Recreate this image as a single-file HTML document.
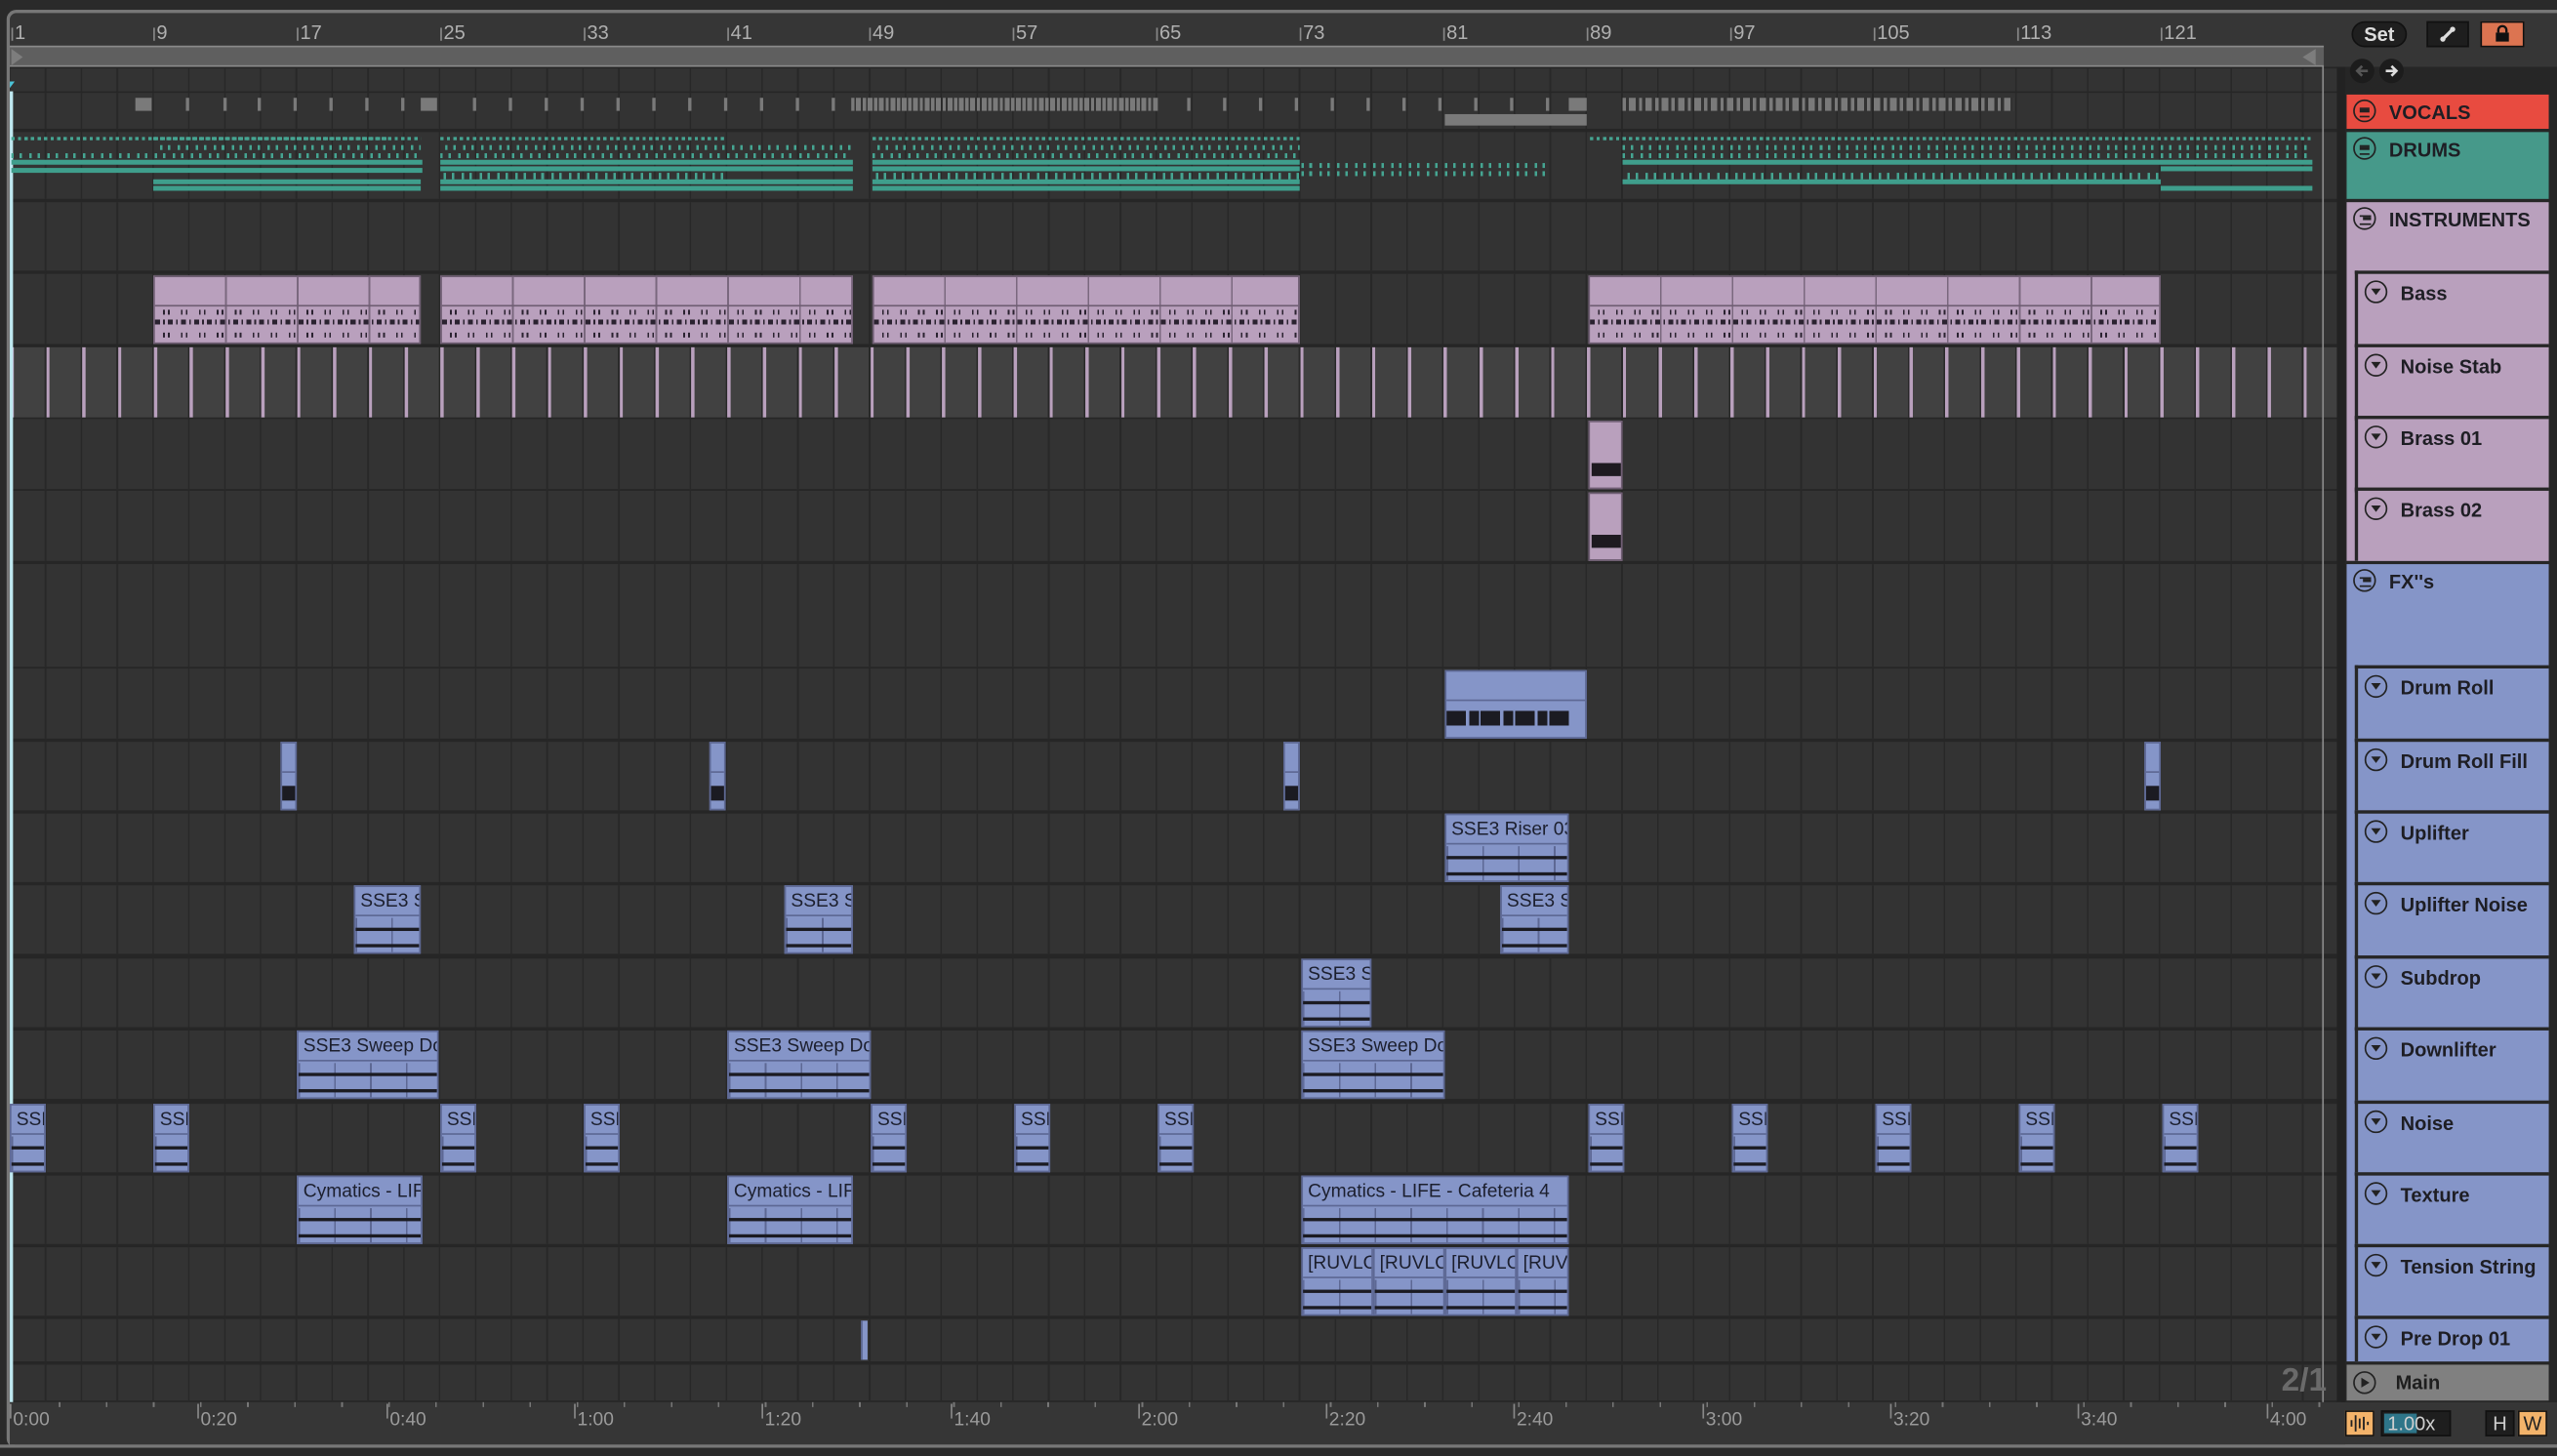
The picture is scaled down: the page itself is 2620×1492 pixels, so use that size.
<!DOCTYPE html>
<html><head><meta charset="utf-8"><style>
*{margin:0;padding:0;box-sizing:border-box}
html,body{width:2620px;height:1492px;overflow:hidden;background:#2a2a2a}
#w{position:absolute;left:0;top:0;width:1568px;height:893px;transform:scale(1.67092,1.67077);transform-origin:0 0;font-family:"Liberation Sans",sans-serif}
.a{position:absolute}
.row{position:absolute;left:6px;width:1429px;background-color:#333;background-image:repeating-linear-gradient(90deg,#282828 0 1px,transparent 1px 21.97px);background-position:-0.5px 0}
.bn{position:absolute;top:14px;font-size:12px;color:#b0b0b0;padding-left:2px;height:13px;line-height:12px}
.bn:before{content:"";position:absolute;left:0;top:3px;width:1px;height:8px;background:#888}
.tn{position:absolute;top:862px;font-size:11.5px;color:#9a9a9a;padding-left:2px;padding-top:3px;height:17px}
.tn:before{content:"";position:absolute;left:0;top:-1px;width:1px;height:9px;background:#888}
.cl{position:absolute;background:#8595c8;border:1px solid #5d6894;overflow:hidden}
.cl .t{height:18px;line-height:18px;font-size:11.5px;color:#1c1f2e;padding-left:3px;white-space:nowrap;border-bottom:1px solid #5d6894}
.cl .wv{position:absolute;left:0;right:0;top:19px;bottom:0;background-image:linear-gradient(#1b1b22,#1b1b22),linear-gradient(#1b1b22,#1b1b22),repeating-linear-gradient(90deg,#5d6894 0 1px,transparent 1px 21.97px);background-size:100% 2px,100% 2px,100% 100%;background-position:0 6px,0 16px,0 0;background-repeat:no-repeat,no-repeat,repeat}
.pk{position:absolute;background:#b9a0bd;border:1px solid #6f5e73}
.hd{position:absolute;left:1439px;width:124px;font-weight:bold;font-size:12px;color:#1e1e24}
.ch{position:absolute;left:1444px;width:119px;border:2px solid #262626;border-right:none;font-weight:bold;font-size:12px;color:#1e1e24}
.ic{position:absolute;width:14px;height:14px;border:1.3px solid #222;border-radius:50%}
.ic.tri:after{content:"";position:absolute;left:2.5px;top:4px;border-left:3.2px solid transparent;border-right:3.2px solid transparent;border-top:4.5px solid #222}
.ic.ln:after{content:"";position:absolute;left:3px;top:3.5px;width:6px;height:4px;border-top:1.3px solid #222;border-bottom:1.3px solid #222}
.ic.ln:before{content:"";position:absolute;left:3px;top:5.3px;width:6px;height:1.3px;background:#222}
.ic.gr:after{content:"";position:absolute;left:2.5px;top:3.5px;width:7px;height:4px;border-top:1.3px solid #222;border-bottom:1.3px solid #222}
.ic.gr:before{content:"";position:absolute;left:4.5px;top:5.3px;width:5px;height:1.3px;background:#222}
.lbl{position:absolute;left:26px;top:6px}
.dr{position:absolute;background:#3f9e8c;height:2px}
.dd{position:absolute;height:2px;background:repeating-linear-gradient(90deg,#45a592 0 2px,transparent 2px 4px)}
.dd2{position:absolute;height:3px;background:repeating-linear-gradient(90deg,#45a592 0 1.5px,transparent 1.5px 5px,#45a592 5px 6.5px,transparent 6.5px 11px)}
.vb{position:absolute;top:60px;height:8px;background:#7a7a7a}
</style></head><body><div id="w">
<div class="a" style="left:4px;top:6px;width:1564px;height:882px;border:2px solid #777;border-right:none;border-radius:6px 0 0 6px;background:#363636"></div>
<div class="bn" style="left:7px">1</div><div class="bn" style="left:94px">9</div><div class="bn" style="left:182px">17</div><div class="bn" style="left:270px">25</div><div class="bn" style="left:358px">33</div><div class="bn" style="left:446px">41</div><div class="bn" style="left:533px">49</div><div class="bn" style="left:621px">57</div><div class="bn" style="left:709px">65</div><div class="bn" style="left:797px">73</div><div class="bn" style="left:885px">81</div><div class="bn" style="left:973px">89</div><div class="bn" style="left:1061px">97</div><div class="bn" style="left:1149px">105</div><div class="bn" style="left:1237px">113</div><div class="bn" style="left:1325px">121</div>
<div class="a" style="left:6px;top:28px;width:1419px;height:13px;background:#5f5f5f;border-top:1.5px solid #8a8a8a;border-bottom:1.5px solid #8a8a8a"></div>
<div class="a" style="left:7px;top:30px;width:0;height:0;border-top:5px solid transparent;border-bottom:5px solid transparent;border-left:7px solid #7d7d7d"></div>
<div class="a" style="left:1412px;top:30px;width:0;height:0;border-top:5px solid transparent;border-bottom:5px solid transparent;border-right:8px solid #7d7d7d"></div>
<div class="a" style="left:6px;top:41px;width:1432px;height:819px;background:#262626"></div>
<div class="row" style="top:42px;height:14px"></div>
<div class="row" style="top:57px;height:22px"></div>
<div class="row" style="top:81px;height:41px"></div>
<div class="row" style="top:124px;height:42px"></div>
<div class="row" style="top:168px;height:43px"></div>
<div class="row" style="top:213px;height:43px;background-color:#414141;background-image:repeating-linear-gradient(90deg,#282828 0 1px,#b9a0bd 1px 3px,transparent 3px 21.97px)"></div>
<div class="row" style="top:257px;height:43px"></div>
<div class="row" style="top:301px;height:43px"></div>
<div class="row" style="top:346px;height:63px"></div>
<div class="row" style="top:410px;height:43px"></div>
<div class="row" style="top:455px;height:42px"></div>
<div class="row" style="top:499px;height:42px"></div>
<div class="row" style="top:543px;height:42px"></div>
<div class="row" style="top:588px;height:42px"></div>
<div class="row" style="top:632px;height:42px"></div>
<div class="row" style="top:677px;height:42px"></div>
<div class="row" style="top:721px;height:42px"></div>
<div class="row" style="top:765px;height:42px"></div>
<div class="row" style="top:809px;height:26px"></div>
<div class="row" style="top:837px;height:22px"></div>
<div class="a" style="left:1424px;top:41px;width:1px;height:819px;background:#8a8a8a"></div>
<div class="a" style="left:1433px;top:41px;width:6px;height:819px;background:#222"></div>
<div class="a" style="left:6px;top:56px;width:1.5px;height:804px;background:#bfe8f0"></div>
<div class="a" style="left:6px;top:50px;width:0;height:0;border-left:3px solid #4cc4d8;border-right:3px solid transparent;border-bottom:4px solid transparent"></div>
<div class="vb" style="left:83px;width:10px"></div><div class="vb" style="left:114px;width:2px"></div><div class="vb" style="left:137px;width:2px"></div><div class="vb" style="left:158px;width:2px"></div><div class="vb" style="left:180px;width:2px"></div><div class="vb" style="left:202px;width:2px"></div><div class="vb" style="left:224px;width:2px"></div><div class="vb" style="left:246px;width:2px"></div><div class="vb" style="left:258px;width:10px"></div><div class="vb" style="left:290px;width:2px"></div><div class="vb" style="left:312px;width:2px"></div><div class="vb" style="left:334px;width:2px"></div><div class="vb" style="left:356px;width:2px"></div><div class="vb" style="left:378px;width:2px"></div><div class="vb" style="left:400px;width:2px"></div><div class="vb" style="left:422px;width:2px"></div><div class="vb" style="left:444px;width:2px"></div><div class="vb" style="left:466px;width:2px"></div><div class="vb" style="left:488px;width:2px"></div><div class="vb" style="left:510px;width:2px"></div>
<div class="vb" style="left:522px;width:188px;background:repeating-linear-gradient(90deg,#7a7a7a 0 2px,transparent 2px 3px,#7a7a7a 3px 6px,transparent 6px 7px)"></div>
<div class="vb" style="left:728px;width:2px"></div><div class="vb" style="left:750px;width:2px"></div><div class="vb" style="left:772px;width:2px"></div><div class="vb" style="left:794px;width:2px"></div><div class="vb" style="left:816px;width:2px"></div><div class="vb" style="left:838px;width:2px"></div><div class="vb" style="left:860px;width:2px"></div><div class="vb" style="left:882px;width:2px"></div><div class="vb" style="left:904px;width:2px"></div><div class="vb" style="left:926px;width:2px"></div><div class="vb" style="left:948px;width:2px"></div><div class="vb" style="left:962px;width:11px"></div>
<div class="a" style="left:886px;top:70px;width:87px;height:7px;background:#7a7a7a"></div>
<div class="vb" style="left:995px;width:240px;background:repeating-linear-gradient(90deg,#7a7a7a 0 2px,transparent 2px 4px,#7a7a7a 4px 8px,transparent 8px 10px)"></div>
<div class="dd" style="left:7px;top:84px;width:231px"></div>
<div class="dd2" style="left:7px;top:94px;width:250px"></div>
<div class="dr" style="left:7px;top:98px;width:252px;height:3px"></div><div class="dr" style="left:7px;top:103px;width:252px;height:3px"></div>
<div class="dd" style="left:94px;top:84px;width:164px"></div><div class="dd2" style="left:98px;top:89px;width:160px"></div>
<div class="dr" style="left:94px;top:110px;width:164px;height:3px"></div><div class="dr" style="left:94px;top:114px;width:164px;height:3px"></div>
<div class="dd" style="left:270px;top:84px;width:174px"></div><div class="dd2" style="left:273px;top:89px;width:250px"></div><div class="dd2" style="left:270px;top:94px;width:253px"></div>
<div class="dr" style="left:270px;top:98px;width:253px;height:3px"></div><div class="dr" style="left:270px;top:102px;width:253px;height:3px"></div>
<div class="dd2" style="left:272px;top:106px;width:172px;height:4px"></div>
<div class="dr" style="left:270px;top:110px;width:253px;height:3px"></div><div class="dr" style="left:270px;top:114px;width:253px;height:3px"></div>
<div class="dd" style="left:535px;top:84px;width:262px"></div><div class="dd2" style="left:538px;top:89px;width:259px"></div><div class="dd2" style="left:535px;top:94px;width:262px"></div>
<div class="dr" style="left:535px;top:98px;width:262px;height:3px"></div><div class="dr" style="left:535px;top:102px;width:262px;height:3px"></div>
<div class="dd2" style="left:537px;top:106px;width:260px;height:4px"></div>
<div class="dr" style="left:535px;top:110px;width:262px;height:3px"></div><div class="dr" style="left:535px;top:114px;width:262px;height:3px"></div>
<div class="dd2" style="left:798px;top:100px;width:152px;height:3px"></div><div class="dd2" style="left:798px;top:105px;width:152px;height:3px"></div>
<div class="dd" style="left:975px;top:84px;width:443px"></div><div class="dd2" style="left:995px;top:89px;width:423px"></div><div class="dd2" style="left:995px;top:94px;width:423px"></div>
<div class="dr" style="left:995px;top:98px;width:423px;height:3px"></div><div class="dr" style="left:1325px;top:102px;width:93px;height:3px"></div>
<div class="dd2" style="left:998px;top:106px;width:327px;height:4px"></div>
<div class="dr" style="left:995px;top:110px;width:330px;height:3px"></div><div class="dr" style="left:1325px;top:114px;width:93px;height:3px"></div>
<div class="pk" style="left:94px;top:169px;width:164px;height:42px;background-image:linear-gradient(#6f5e73,#6f5e73),repeating-linear-gradient(90deg,transparent 0 43px,#7a687e 43px 44px);background-size:100% 1px,100% 100%;background-position:0 17px,0 0;background-repeat:no-repeat,repeat"></div>
<div class="pk" style="left:270px;top:169px;width:253px;height:42px;background-image:linear-gradient(#6f5e73,#6f5e73),repeating-linear-gradient(90deg,transparent 0 43px,#7a687e 43px 44px);background-size:100% 1px,100% 100%;background-position:0 17px,0 0;background-repeat:no-repeat,repeat"></div>
<div class="pk" style="left:535px;top:169px;width:262px;height:42px;background-image:linear-gradient(#6f5e73,#6f5e73),repeating-linear-gradient(90deg,transparent 0 43px,#7a687e 43px 44px);background-size:100% 1px,100% 100%;background-position:0 17px,0 0;background-repeat:no-repeat,repeat"></div>
<div class="pk" style="left:974px;top:169px;width:351px;height:42px;background-image:linear-gradient(#6f5e73,#6f5e73),repeating-linear-gradient(90deg,transparent 0 43px,#7a687e 43px 44px);background-size:100% 1px,100% 100%;background-position:0 17px,0 0;background-repeat:no-repeat,repeat"></div>
<div class="a" style="left:95px;top:190px;width:162px;height:3px;background:repeating-linear-gradient(90deg,transparent 0 5px,#2a2230 5px 6px,transparent 6px 8px,#2a2230 8px 9px,transparent 9px 11px)"></div>
<div class="a" style="left:95px;top:196px;width:162px;height:3px;background:repeating-linear-gradient(90deg,#2a2230 0 3px,transparent 3px 5px,#2a2230 5px 6px,transparent 6px 8px)"></div>
<div class="a" style="left:95px;top:204px;width:162px;height:3px;background:repeating-linear-gradient(90deg,transparent 0 5px,#2a2230 5px 6px,transparent 6px 8px,#2a2230 8px 9px,transparent 9px 11px)"></div>
<div class="a" style="left:271px;top:190px;width:251px;height:3px;background:repeating-linear-gradient(90deg,transparent 0 5px,#2a2230 5px 6px,transparent 6px 8px,#2a2230 8px 9px,transparent 9px 11px)"></div>
<div class="a" style="left:271px;top:196px;width:251px;height:3px;background:repeating-linear-gradient(90deg,#2a2230 0 3px,transparent 3px 5px,#2a2230 5px 6px,transparent 6px 8px)"></div>
<div class="a" style="left:271px;top:204px;width:251px;height:3px;background:repeating-linear-gradient(90deg,transparent 0 5px,#2a2230 5px 6px,transparent 6px 8px,#2a2230 8px 9px,transparent 9px 11px)"></div>
<div class="a" style="left:536px;top:190px;width:260px;height:3px;background:repeating-linear-gradient(90deg,transparent 0 5px,#2a2230 5px 6px,transparent 6px 8px,#2a2230 8px 9px,transparent 9px 11px)"></div>
<div class="a" style="left:536px;top:196px;width:260px;height:3px;background:repeating-linear-gradient(90deg,#2a2230 0 3px,transparent 3px 5px,#2a2230 5px 6px,transparent 6px 8px)"></div>
<div class="a" style="left:536px;top:204px;width:260px;height:3px;background:repeating-linear-gradient(90deg,transparent 0 5px,#2a2230 5px 6px,transparent 6px 8px,#2a2230 8px 9px,transparent 9px 11px)"></div>
<div class="a" style="left:975px;top:190px;width:349px;height:3px;background:repeating-linear-gradient(90deg,transparent 0 5px,#2a2230 5px 6px,transparent 6px 8px,#2a2230 8px 9px,transparent 9px 11px)"></div>
<div class="a" style="left:975px;top:196px;width:349px;height:3px;background:repeating-linear-gradient(90deg,#2a2230 0 3px,transparent 3px 5px,#2a2230 5px 6px,transparent 6px 8px)"></div>
<div class="a" style="left:975px;top:204px;width:349px;height:3px;background:repeating-linear-gradient(90deg,transparent 0 5px,#2a2230 5px 6px,transparent 6px 8px,#2a2230 8px 9px,transparent 9px 11px)"></div>
<div class="pk" style="left:974px;top:258px;width:21px;height:42px;background-image:linear-gradient(#1e1a20,#1e1a20);background-size:18px 8px;background-position:1px 25px;background-repeat:no-repeat"></div>
<div class="pk" style="left:974px;top:302px;width:21px;height:42px;background-image:linear-gradient(#1e1a20,#1e1a20);background-size:18px 8px;background-position:1px 25px;background-repeat:no-repeat"></div>
<div class="cl" style="left:886px;top:411px;width:87px;height:42px"><div class="t"></div><div class="a" style="left:0;top:24px;width:76px;height:9px;background:repeating-linear-gradient(90deg,#1b1b22 0 12px,#8595c8 12px 14px,#1b1b22 14px 20px,#8595c8 20px 21px)"></div></div>
<div class="cl" style="left:172px;top:455px;width:10px;height:42px"><div class="t"></div><div class="a" style="left:0;top:26px;width:9px;height:9px;background:#1b1b22"></div></div>
<div class="cl" style="left:435px;top:455px;width:10px;height:42px"><div class="t"></div><div class="a" style="left:0;top:26px;width:9px;height:9px;background:#1b1b22"></div></div>
<div class="cl" style="left:787px;top:455px;width:10px;height:42px"><div class="t"></div><div class="a" style="left:0;top:26px;width:9px;height:9px;background:#1b1b22"></div></div>
<div class="cl" style="left:1315px;top:455px;width:10px;height:42px"><div class="t"></div><div class="a" style="left:0;top:26px;width:9px;height:9px;background:#1b1b22"></div></div>
<div class="cl" style="left:886px;top:499px;width:76px;height:42px"><div class="t">SSE3 Riser 03</div><div class="wv"></div></div>
<div class="cl" style="left:217px;top:543px;width:41px;height:42px"><div class="t">SSE3 Sweep</div><div class="wv"></div></div>
<div class="cl" style="left:481px;top:543px;width:42px;height:42px"><div class="t">SSE3 Sweep</div><div class="wv"></div></div>
<div class="cl" style="left:920px;top:543px;width:42px;height:42px"><div class="t">SSE3 Sweep</div><div class="wv"></div></div>
<div class="cl" style="left:798px;top:588px;width:43px;height:42px"><div class="t">SSE3 Sub</div><div class="wv"></div></div>
<div class="cl" style="left:182px;top:632px;width:87px;height:42px"><div class="t">SSE3 Sweep Down</div><div class="wv"></div></div>
<div class="cl" style="left:446px;top:632px;width:88px;height:42px"><div class="t">SSE3 Sweep Down</div><div class="wv"></div></div>
<div class="cl" style="left:798px;top:632px;width:88px;height:42px"><div class="t">SSE3 Sweep Down</div><div class="wv"></div></div>
<div class="cl" style="left:6px;top:677px;width:22px;height:42px"><div class="t">SSE3</div><div class="wv"></div></div>
<div class="cl" style="left:94px;top:677px;width:22px;height:42px"><div class="t">SSE3</div><div class="wv"></div></div>
<div class="cl" style="left:270px;top:677px;width:22px;height:42px"><div class="t">SSE3</div><div class="wv"></div></div>
<div class="cl" style="left:358px;top:677px;width:22px;height:42px"><div class="t">SSE3</div><div class="wv"></div></div>
<div class="cl" style="left:534px;top:677px;width:22px;height:42px"><div class="t">SSE3</div><div class="wv"></div></div>
<div class="cl" style="left:622px;top:677px;width:22px;height:42px"><div class="t">SSE3</div><div class="wv"></div></div>
<div class="cl" style="left:710px;top:677px;width:22px;height:42px"><div class="t">SSE3</div><div class="wv"></div></div>
<div class="cl" style="left:974px;top:677px;width:22px;height:42px"><div class="t">SSE3</div><div class="wv"></div></div>
<div class="cl" style="left:1062px;top:677px;width:22px;height:42px"><div class="t">SSE3</div><div class="wv"></div></div>
<div class="cl" style="left:1150px;top:677px;width:22px;height:42px"><div class="t">SSE3</div><div class="wv"></div></div>
<div class="cl" style="left:1238px;top:677px;width:22px;height:42px"><div class="t">SSE3</div><div class="wv"></div></div>
<div class="cl" style="left:1326px;top:677px;width:22px;height:42px"><div class="t">SSE3</div><div class="wv"></div></div>
<div class="cl" style="left:182px;top:721px;width:77px;height:42px"><div class="t">Cymatics - LIFE</div><div class="wv"></div></div>
<div class="cl" style="left:446px;top:721px;width:77px;height:42px"><div class="t">Cymatics - LIFE</div><div class="wv"></div></div>
<div class="cl" style="left:798px;top:721px;width:164px;height:42px"><div class="t">Cymatics - LIFE - Cafeteria 4</div><div class="wv"></div></div>
<div class="cl" style="left:798px;top:765px;width:44px;height:42px"><div class="t">[RUVLO</div><div class="wv"></div></div>
<div class="cl" style="left:842px;top:765px;width:44px;height:42px"><div class="t">[RUVLO</div><div class="wv"></div></div>
<div class="cl" style="left:886px;top:765px;width:44px;height:42px"><div class="t">[RUVLO</div><div class="wv"></div></div>
<div class="cl" style="left:930px;top:765px;width:32px;height:42px"><div class="t">[RUVLO</div><div class="wv"></div></div>
<div class="a" style="left:528px;top:810px;width:4px;height:24px;background:#8595c8;border-left:1px solid #5d6894"></div>
<div class="a" style="left:1399px;top:836px;font-size:20px;font-weight:bold;color:#6a6a6a">2/1</div>
<div class="a" style="left:6px;top:860px;width:1432px;height:26px;background:#363636"></div>
<div class="a" style="left:36px;top:860px;width:1390px;height:3px;background:repeating-linear-gradient(90deg,#777 0 1px,transparent 1px 28.87px)"></div>
<div class="tn" style="left:6px">0:00</div><div class="tn" style="left:121px">0:20</div><div class="tn" style="left:237px">0:40</div><div class="tn" style="left:352px">1:00</div><div class="tn" style="left:467px">1:20</div><div class="tn" style="left:583px">1:40</div><div class="tn" style="left:698px">2:00</div><div class="tn" style="left:813px">2:20</div><div class="tn" style="left:928px">2:40</div><div class="tn" style="left:1044px">3:00</div><div class="tn" style="left:1159px">3:20</div><div class="tn" style="left:1274px">3:40</div><div class="tn" style="left:1390px">4:00</div>
<div class="a" style="left:0;top:886px;width:1568px;height:2px;background:#777"></div>
<div class="a" style="left:0;top:888px;width:1568px;height:5px;background:#2a2a2a"></div>
<div class="a" style="left:1438px;top:41px;width:130px;height:819px;background:#262626"></div>
<div class="a" style="left:1442px;top:13px;width:34px;height:16px;border-radius:8px;background:#1f1f1f;border:1px solid #111;color:#ddd;font-size:12px;font-weight:bold;text-align:center;line-height:14px">Set</div>
<div class="a" style="left:1488px;top:13px;width:26px;height:16px;background:#1e1e1e;border:1px solid #111"><svg width="24" height="14" viewBox="0 0 24 14"><path d="M9 10 L15 4" stroke="#ddd" stroke-width="2"/><circle cx="9" cy="10" r="1.6" fill="#ddd"/><circle cx="15" cy="4" r="1.6" fill="#ddd"/></svg></div>
<div class="a" style="left:1521px;top:13px;width:27px;height:16px;background:#dc7451;border:1px solid #111"><svg width="25" height="14" viewBox="0 0 25 14"><path d="M10 6 V4.5 a2.5 2.5 0 0 1 5 0 V6" stroke="#111" stroke-width="1.4" fill="none"/><rect x="8.5" y="6" width="8" height="5.5" fill="#111"/></svg></div>
<div class="a" style="left:1441px;top:36px;width:15px;height:15px;border-radius:50%;background:#1c1c1c"><svg width="15" height="15"><path d="M11 7.5 H4.5 M7.5 4.5 L4.5 7.5 L7.5 10.5" stroke="#555" stroke-width="1.6" fill="none"/></svg></div>
<div class="a" style="left:1459px;top:36px;width:15px;height:15px;border-radius:50%;background:#1c1c1c"><svg width="15" height="15"><path d="M4 7.5 H10.5 M7.5 4.5 L10.5 7.5 L7.5 10.5" stroke="#ddd" stroke-width="1.6" fill="none"/></svg></div>
<div class="a" style="left:1436px;top:41px;width:2px;height:819px;background:#222"></div>
<div class="hd" style="top:58px;height:21px;background:#e84b40"><div class="ic ln" style="left:4px;top:3px"></div><div class="lbl" style="top:4px">VOCALS</div></div>
<div class="hd" style="top:81px;height:41px;background:#46998a"><div class="ic ln" style="left:4px;top:3px"></div><div class="lbl" style="top:4px">DRUMS</div></div>
<div class="hd" style="top:124px;height:220px;background:#b9a0bd"><div class="ic gr" style="left:4px;top:3px"></div><div class="lbl" style="top:4px">INSTRUMENTS</div></div>
<div class="ch" style="top:166px;height:47px;background:#b9a0bd"><div class="ic tri" style="left:4px;top:4px"></div><div class="lbl" style="top:5px">Bass</div></div>
<div class="ch" style="top:211px;height:47px;background:#b9a0bd"><div class="ic tri" style="left:4px;top:4px"></div><div class="lbl" style="top:5px">Noise Stab</div></div>
<div class="ch" style="top:255px;height:47px;background:#b9a0bd"><div class="ic tri" style="left:4px;top:4px"></div><div class="lbl" style="top:5px">Brass 01</div></div>
<div class="ch" style="top:299px;height:45px;background:#b9a0bd;border-bottom:none"><div class="ic tri" style="left:4px;top:4px"></div><div class="lbl" style="top:5px">Brass 02</div></div>
<div class="hd" style="top:346px;height:489px;background:#8595c8"><div class="ic gr" style="left:4px;top:3px"></div><div class="lbl" style="top:4px">FX''s</div></div>
<div class="ch" style="top:408px;height:47px;background:#8595c8"><div class="ic tri" style="left:4px;top:4px"></div><div class="lbl" style="top:5px">Drum Roll</div></div>
<div class="ch" style="top:453px;height:46px;background:#8595c8"><div class="ic tri" style="left:4px;top:4px"></div><div class="lbl" style="top:5px">Drum Roll Fill</div></div>
<div class="ch" style="top:497px;height:46px;background:#8595c8"><div class="ic tri" style="left:4px;top:4px"></div><div class="lbl" style="top:5px">Uplifter</div></div>
<div class="ch" style="top:541px;height:47px;background:#8595c8"><div class="ic tri" style="left:4px;top:4px"></div><div class="lbl" style="top:5px">Uplifter Noise</div></div>
<div class="ch" style="top:586px;height:46px;background:#8595c8"><div class="ic tri" style="left:4px;top:4px"></div><div class="lbl" style="top:5px">Subdrop</div></div>
<div class="ch" style="top:630px;height:47px;background:#8595c8"><div class="ic tri" style="left:4px;top:4px"></div><div class="lbl" style="top:5px">Downlifter</div></div>
<div class="ch" style="top:675px;height:46px;background:#8595c8"><div class="ic tri" style="left:4px;top:4px"></div><div class="lbl" style="top:5px">Noise</div></div>
<div class="ch" style="top:719px;height:46px;background:#8595c8"><div class="ic tri" style="left:4px;top:4px"></div><div class="lbl" style="top:5px">Texture</div></div>
<div class="ch" style="top:763px;height:46px;background:#8595c8"><div class="ic tri" style="left:4px;top:4px"></div><div class="lbl" style="top:5px">Tension String</div></div>
<div class="ch" style="top:807px;height:28px;background:#8595c8;border-bottom:none"><div class="ic tri" style="left:4px;top:4px"></div><div class="lbl" style="top:5px">Pre Drop 01</div></div>
<div class="hd" style="top:837px;height:22px;background:#808080;font-weight:normal"><div class="ic" style="left:4px;top:3.5px"></div><div class="a" style="left:9px;top:8px;width:0;height:0;border-top:3.5px solid transparent;border-bottom:3.5px solid transparent;border-left:5px solid #222"></div><div class="lbl" style="left:30px;top:4px;font-weight:bold;color:#1e1e1e">Main</div></div>
<div class="a" style="left:1563px;top:41px;width:5px;height:819px;background:#262626"></div>
<div class="a" style="left:1438px;top:865px;width:18px;height:16px;background:#f3b36a;border:1px solid #111"><svg width="16" height="14"><path d="M3 5v4M5.5 2v10M8 4v6M10.5 3v8M13 6v2" stroke="#222" stroke-width="1.1"/></svg></div>
<div class="a" style="left:1460px;top:865px;width:43px;height:16px;background:#1e1e1e;border:1px solid #111"><div class="a" style="left:1px;top:1px;width:20px;height:12px;background:#2e7589"></div><div class="a" style="left:3px;top:0;font-size:12px;color:#cfcfcf;line-height:14px">1.00x</div></div>
<div class="a" style="left:1524px;top:865px;width:18px;height:16px;background:#1e1e1e;border:1px solid #111;color:#ccc;font-size:12px;text-align:center;line-height:14px">H</div>
<div class="a" style="left:1544px;top:865px;width:18px;height:16px;background:#f3b36a;border:1px solid #111;color:#222;font-size:12px;text-align:center;line-height:14px">W</div>
</div></body></html>
